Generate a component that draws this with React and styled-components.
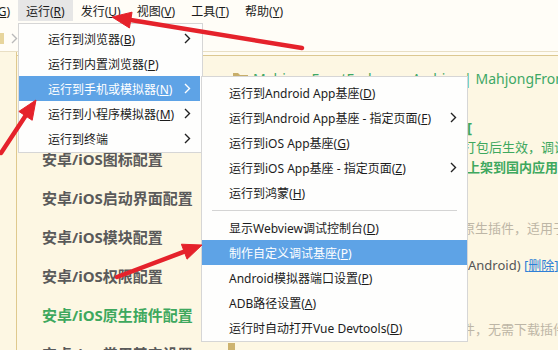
import styled, { createGlobalStyle } from 'styled-components';

const GlobalStyle = createGlobalStyle`
  html, body {
    margin: 0;
    padding: 0;
  }
  body {
    font-family: "Noto Sans", "Noto Sans CJK SC", sans-serif;
    font-size: 12px;
    color: #1c1c1c;
  }
`;

const Page = styled.div`
  position: relative;
  width: 558px;
  height: 350px;
  overflow: hidden;
  background: #fffdf7;
`;

const MenuBar = styled.div`
  display: flex;
  height: 21px;
  margin-left: -38px;
  white-space: nowrap;
`;

const MenuTitle = styled.div`
  display: flex;
  align-items: center;
  padding: 0 8px;
  height: 21px;
  background: ${(p) => (p.$open ? '#e6e6e6' : 'transparent')};
`;

const TabStrip = styled.div`
  display: flex;
  align-items: center;
  gap: 7px;
  height: 30px;
  padding-top: 4px;
  box-sizing: border-box;
`;

const CrumbBox = styled.div`
  width: 4px;
  height: 11px;
  background: #e7d59c;
`;

const Workspace = styled.div`
  display: flex;
  height: 299px;
  overflow: hidden;
  border-top: 1px solid #e9dfc4;
  background: #fdf7e3;
`;

const Gutter = styled.div`
  width: 16px;
  flex: none;
  border-right: 1px solid #dfc98e;
`;

const Editor = styled.div`
  flex: 1;
  display: flex;
  flex-direction: column;
  border-top: 3px solid #fffcf2;
  box-shadow: inset 0 1px 0 #dcc891;
`;

const PathBar = styled.div`
  flex: none;
  display: flex;
  align-items: center;
  gap: 5px;
  height: 46px;
  padding-left: 216px;
  white-space: nowrap;
  font-size: 14px;
  color: #3ea866;
`;

const Body = styled.div`
  display: flex;
  flex: none;
`;

const Nav = styled.div`
  width: 211px;
  flex: none;
  padding-left: 25px;
  box-sizing: border-box;
`;

const NavItem = styled.div`
  height: 39px;
  line-height: 39px;
  font-size: 15px;
  font-weight: 700;
  white-space: nowrap;
  color: ${(p) => (p.$active ? '#3ea85e' : '#5a5a5a')};
`;

const Detail = styled.div`
  display: flex;
  flex-direction: column;
  white-space: nowrap;
`;

const Line = styled.div`
  margin-top: ${(p) => p.$mt}px;
  padding-left: ${(p) => p.$indent}px;
  height: 20px;
  line-height: 20px;
  font-size: ${(p) => (p.$head ? 15 : 13)}px;
  font-weight: ${(p) => (p.$bold ? 700 : 400)};
  color: ${(p) => p.$color};
`;

const DeleteLink = styled.span`
  color: #2f7fd6;
`;

const Bullet = styled.div`
  margin-top: 4px;
  width: 7px;
  height: 7px;
  background: #cdb36f;
`;

const Menu = styled.div`
  position: absolute;
  left: ${(p) => p.$left}px;
  top: ${(p) => p.$top}px;
  width: ${(p) => p.$width}px;
  padding: ${(p) => p.$pad};
  box-sizing: border-box;
  background: #fefefd;
  border: 1px solid #d6d6d6;
  white-space: nowrap;
`;

const Item = styled.div`
  display: flex;
  align-items: center;
  justify-content: space-between;
  height: 25px;
  padding: 0 ${(p) => p.$right}px 0 ${(p) => p.$left}px;
  background: ${(p) => (p.$active ? '#5ea3e6' : 'transparent')};
  color: ${(p) => (p.$active ? '#ffffff' : '#1c1c1c')};
`;

const Separator = styled.div`
  height: 10px;
  margin: 0 10px;
  display: flex;
  align-items: center;
  &::after {
    content: '';
    flex: 1;
    height: 1px;
    background: #d4d4d4;
  }
`;

const Overlay = styled.svg`
  position: absolute;
  left: 0;
  top: 0;
  pointer-events: none;
`;

const Label = ({ text, hot }) => (
  <span>
    {text}
    {hot && (
      <>
        (<u>{hot}</u>)
      </>
    )}
  </span>
);

const Chevron = ({ color = '#222' }) => (
  <svg width="7" height="11" viewBox="0 0 7 11">
    <polyline points="1,1 5.5,5.5 1,10" fill="none" stroke={color} strokeWidth="1.4" />
  </svg>
);

const Folder = () => (
  <svg width="15" height="12" viewBox="0 0 15 12">
    <path d="M0 1h5l2 2h8v9H0z" fill="#c8ae6a" />
  </svg>
);

const Arrow = ({ from, to }) => {
  const dx = to[0] - from[0];
  const dy = to[1] - from[1];
  const len = Math.hypot(dx, dy);
  const ux = dx / len;
  const uy = dy / len;
  const bx = to[0] - ux * 19;
  const by = to[1] - uy * 19;
  const px = -uy * 8;
  const py = ux * 8;
  return (
    <g fill="#e5222b" stroke="#e5222b">
      <line x1={from[0]} y1={from[1]} x2={bx} y2={by} strokeWidth="4.5" strokeLinecap="round" />
      <polygon points={`${to[0]},${to[1]} ${bx + px},${by + py} ${bx - px},${by - py}`} strokeWidth="1" />
    </g>
  );
};

const titles = [
  ['转到', 'G'],
  ['运行', 'R', true],
  ['发行', 'U'],
  ['视图', 'V'],
  ['工具', 'T'],
  ['帮助', 'Y'],
];

const runMenu = [
  { text: '运行到浏览器', hot: 'B', sub: true },
  { text: '运行到内置浏览器', hot: 'P' },
  { text: '运行到手机或模拟器', hot: 'N', sub: true, active: true },
  { text: '运行到小程序模拟器', hot: 'M', sub: true },
  { text: '运行到终端', sub: true },
];

const deviceMenu = [
  { text: '运行到Android App基座', hot: 'D' },
  { text: '运行到Android App基座 - 指定页面', hot: 'F', sub: true },
  { text: '运行到iOS App基座', hot: 'G' },
  { text: '运行到iOS App基座 - 指定页面', hot: 'Z', sub: true },
  { text: '运行到鸿蒙', hot: 'H' },
  { sep: true },
  { text: '显示Webview调试控制台', hot: 'D' },
  { text: '制作自定义调试基座', hot: 'P', active: true },
  { text: 'Android模拟器端口设置', hot: 'P' },
  { text: 'ADB路径设置', hot: 'A' },
  { text: '运行时自动打开Vue Devtools', hot: 'D' },
];

const navItems = [
  '基础配置',
  '安卓/iOS图标配置',
  '安卓/iOS启动界面配置',
  '安卓/iOS模块配置',
  '安卓/iOS权限配置',
  '安卓/iOS原生插件配置',
  '安卓/iOS常用其它设置',
];

const App = () => (
  <Page>
    <GlobalStyle />
    <MenuBar>
      {titles.map(([t, k, open]) => (
        <MenuTitle key={t} $open={open}>
          <Label text={t} hot={k} />
        </MenuTitle>
      ))}
    </MenuBar>
    <TabStrip>
      <CrumbBox />
      <Chevron color="#b9b9b9" />
    </TabStrip>
    <Workspace>
      <Gutter />
      <Editor>
        <PathBar>
          <Folder />
          <span>MahjongFrontEnd - app Archive | MahjongFrontEnd</span>
        </PathBar>
        <Body>
          <Nav>
            {navItems.map((n) => (
              <NavItem key={n} $active={n === '安卓/iOS原生插件配置'}>
                {n}
              </NavItem>
            ))}
          </Nav>
          <Detail>
            <Line $mt={16} $indent={239} $head $bold $color="#3ea85e">
              [
            </Line>
            <Line $mt={0} $indent={235} $color="#3ea85e">
              打包后生效，调试
            </Line>
            <Line $mt={0} $indent={239} $bold $color="#3ea85e">
              上架到国内应用
            </Line>
            <Line $mt={41} $indent={234} $color="#bdb6a6">
              原生插件，适用于
            </Line>
            <Line $mt={17} $indent={240} $color="#555555">
              Android) <DeleteLink>[<u>删除</u>]</DeleteLink>
            </Line>
            <Line $mt={44} $indent={234} $color="#bdb6a6">
              件，无需下载插件
            </Line>
            <Bullet />
          </Detail>
        </Body>
      </Editor>
    </Workspace>

    <Menu $left={18} $top={23} $width={185} $pad="2px 2px 1px 0">
      {runMenu.map((m) => (
        <Item key={m.text} $active={m.active} $left={29} $right={9}>
          <Label text={m.text} hot={m.hot} />
          {m.sub && <Chevron color={m.active ? '#ffffff' : '#222'} />}
        </Item>
      ))}
    </Menu>

    <Menu $left={201} $top={76} $width={267} $pad="3px 0 1px 0">
      {deviceMenu.map((m, i) =>
        m.sep ? (
          <Separator key={`sep${i}`} />
        ) : (
          <Item key={m.text} $active={m.active} $left={27} $right={10}>
            <Label text={m.text} hot={m.hot} />
            {m.sub && <Chevron />}
          </Item>
        ),
      )}
    </Menu>

    <Overlay width="558" height="350">
      <Arrow from={[302, 48]} to={[112, 17]} />
      <Arrow from={[1, 153]} to={[36, 100]} />
      <Arrow from={[117, 277]} to={[202, 245]} />
    </Overlay>
  </Page>
);

export default App;
